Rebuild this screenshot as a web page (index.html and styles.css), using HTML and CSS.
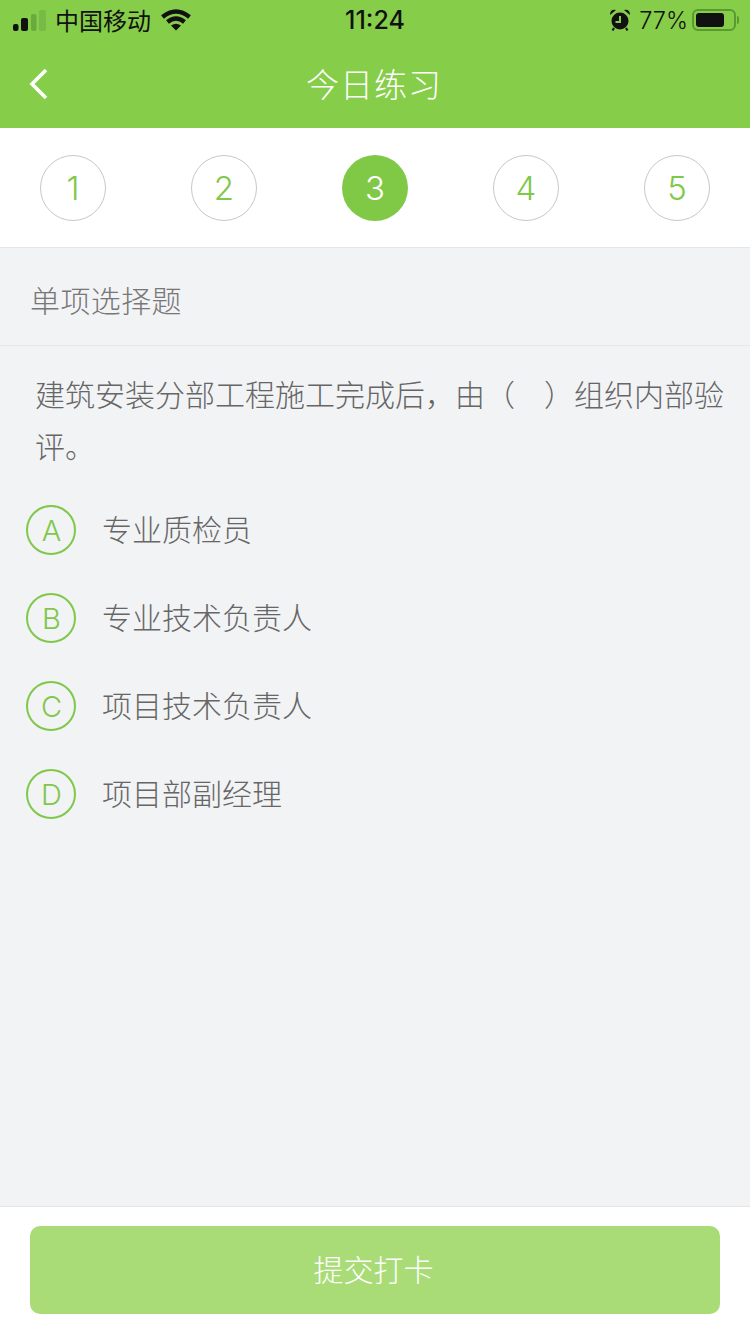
FILE: index.html
```html
<!DOCTYPE html>
<html lang="zh-CN">
<head>
    <meta charset="UTF-8">
    <meta name="viewport" content="width=device-width, initial-scale=1.0">
    <title>今日练习</title>
    <link rel="stylesheet" href="styles.css">
</head>
<body>
    <header class="top">
        <div class="status">
            <div class="status-left">
                <svg class="signal" width="34" height="21" viewBox="0 0 34 21">
                    <rect x="0" y="14" width="5.5" height="7" rx="2" fill="#111"/>
                    <rect x="8" y="8" width="7" height="13" rx="2" fill="#111"/>
                    <rect x="18" y="4" width="5.5" height="17" rx="2" fill="#6aa93e"/>
                    <rect x="26" y="0" width="7" height="21" rx="2" fill="#78ba46"/>
                </svg>
                <span class="carrier">中国移动</span>
                <svg class="wifi" width="30" height="22" viewBox="0 0 30 22">
                    <path d="M1.5 8 Q15 -3 28.5 8" fill="none" stroke="#111" stroke-width="4.4"/>
                    <path d="M6.5 13 Q15 6 23.5 13" fill="none" stroke="#111" stroke-width="4.4"/>
                    <path d="M10 16.5 Q15 13 20 16.5 L15 21.5 Z" fill="#111"/>
                </svg>
            </div>
            <span class="time">11:24</span>
            <div class="status-right">
                <svg class="alarm" width="22" height="22" viewBox="0 0 22 22">
                    <circle cx="11" cy="12" r="8.5" fill="#111"/>
                    <path d="M1 6 Q1 0 7 1 Z M21 6 Q21 0 15 1 Z" fill="#111"/>
                    <path d="M5 19 L3.5 21.5 M17 19 L18.5 21.5" stroke="#111" stroke-width="2"/>
                    <path d="M11 7 V13 H6.5" fill="none" stroke="#86cd4a" stroke-width="2"/>
                </svg>
                <span class="battery-text">77%</span>
                <div class="battery"><div class="battery-fill"></div></div>
                <div class="battery-cap"></div>
            </div>
        </div>
        <div class="nav">
            <svg class="back" width="20" height="32" viewBox="0 0 20 32">
                <path d="M17 2 L3 16 L17 30" fill="none" stroke="#fff" stroke-width="3.6"/>
            </svg>
            <h1>今日练习</h1>
        </div>
    </header>

    <div class="steps">
        <div class="step">1</div>
        <div class="step">2</div>
        <div class="step active">3</div>
        <div class="step">4</div>
        <div class="step">5</div>
    </div>

    <div class="type">单项选择题</div>

    <main class="question">
        <p class="title">建筑安装分部工程施工完成后，由（&nbsp;&nbsp;&nbsp;&nbsp;）组织内部验评。</p>
        <div class="option"><span class="letter">A</span><span class="option-text">专业质检员</span></div>
        <div class="option"><span class="letter">B</span><span class="option-text">专业技术负责人</span></div>
        <div class="option"><span class="letter">C</span><span class="option-text">项目技术负责人</span></div>
        <div class="option"><span class="letter">D</span><span class="option-text">项目部副经理</span></div>
    </main>

    <footer class="bottom">
        <button class="submit">提交打卡</button>
    </footer>
</body>
</html>
```

FILE: styles.css
```css
* {
    box-sizing: border-box;
}
html, body {
    height: 100%;
}
body {
    margin: 0;
    display: flex;
    flex-direction: column;
    height: 1334px;
    overflow: hidden;
    background-color: #f2f3f5;
    font-family: "Noto Sans CJK SC", "Liberation Sans", sans-serif;
    font-weight: 300;
}
.top {
    height: 128px;
    flex: none;
    background-color: #86cd4a;
}
.status {
    height: 40px;
    padding: 0 11px 0 13px;
    display: flex;
    justify-content: space-between;
    align-items: center;
    position: relative;
    color: #111;
}
.status-left, .status-right {
    display: flex;
    align-items: center;
}
.signal {
    margin-right: 8px;
}
.carrier {
    font-size: 24px;
    font-weight: 400;
    line-height: 40px;
}
.wifi {
    margin-left: 10px;
}
.time {
    position: absolute;
    left: 0;
    right: 0;
    text-align: center;
    font-family: Inter, "Liberation Sans", sans-serif;
    font-size: 25px;
    font-weight: 500;
}
.alarm {
    margin-right: 8px;
}
.battery-text {
    font-family: Inter, "Liberation Sans", sans-serif;
    font-size: 23.5px;
    font-weight: 300;
    margin-right: 4px;
}
.battery {
    width: 44px;
    height: 22px;
    padding: 2px;
    border: 2px solid #5a9a30;
    border-radius: 6px;
}
.battery-fill {
    width: 28px;
    height: 100%;
    background-color: #111;
    border-radius: 3px;
}
.battery-cap {
    width: 2px;
    height: 8px;
    margin-left: 1px;
    background-color: #5a9a30;
    border-radius: 0 2px 2px 0;
}
.nav {
    height: 88px;
    padding: 0 2px 2px 0;
    display: flex;
    justify-content: center;
    align-items: center;
    position: relative;
}
.nav h1 {
    margin: 0;
    color: #fff;
    font-size: 33px;
    font-weight: 300;
    letter-spacing: 1px;
}
.back {
    position: absolute;
    left: 29px;
    top: 28px;
}
.steps {
    height: 120px;
    flex: none;
    padding: 0 40px 0;
    display: flex;
    justify-content: space-between;
    align-items: center;
    background-color: #fff;
    border-bottom: 1px solid #e6e6e6;
}
.step {
    width: 66px;
    height: 66px;
    border: 1px solid #c8c8c8;
    border-radius: 50%;
    display: flex;
    justify-content: center;
    align-items: center;
    color: #7fc84a;
    font-family: Inter, "Liberation Sans", sans-serif;
    font-size: 33px;
    font-weight: 350;
}
.step.active {
    border: none;
    background-color: #80c946;
    color: #fff;
}
.type {
    height: 98px;
    flex: none;
    padding: 4px 30px 0;
    display: flex;
    align-items: center;
    color: #777;
    font-size: 30px;
    letter-spacing: 0.4px;
    border-bottom: 1px solid #e6e7e9;
}
.question {
    flex: 1;
}
.title {
    margin: 21px 20px 0 35px;
    color: #666;
    font-size: 30px;
    line-height: 52px;
    word-spacing: 0.6px;
}
.option {
    height: 88px;
    padding-left: 26px;
    display: flex;
    align-items: center;
    color: #666;
    font-size: 30px;
}
.title + .option {
    margin-top: 15px;
}
.option-text {
    padding-bottom: 4px;
}
.letter {
    width: 50px;
    height: 50px;
    margin-right: 26px;
    padding-left: 1px;
    border: 2px solid #7fc84a;
    border-radius: 50%;
    display: flex;
    justify-content: center;
    align-items: center;
    color: #7fc84a;
    font-family: Inter, "Liberation Sans", sans-serif;
    font-size: 29px;
    font-weight: 350;
}
.bottom {
    height: 128px;
    flex: none;
    padding: 19px 30px 20px;
    background-color: #fff;
    border-top: 1px solid #e6e6e6;
}
.submit {
    width: 100%;
    height: 88px;
    padding: 0 3px 4px 0;
    border: none;
    border-radius: 10px;
    background-color: #a9dc77;
    color: #fff;
    font-family: inherit;
    font-size: 30px;
    font-weight: 300;
}
```
